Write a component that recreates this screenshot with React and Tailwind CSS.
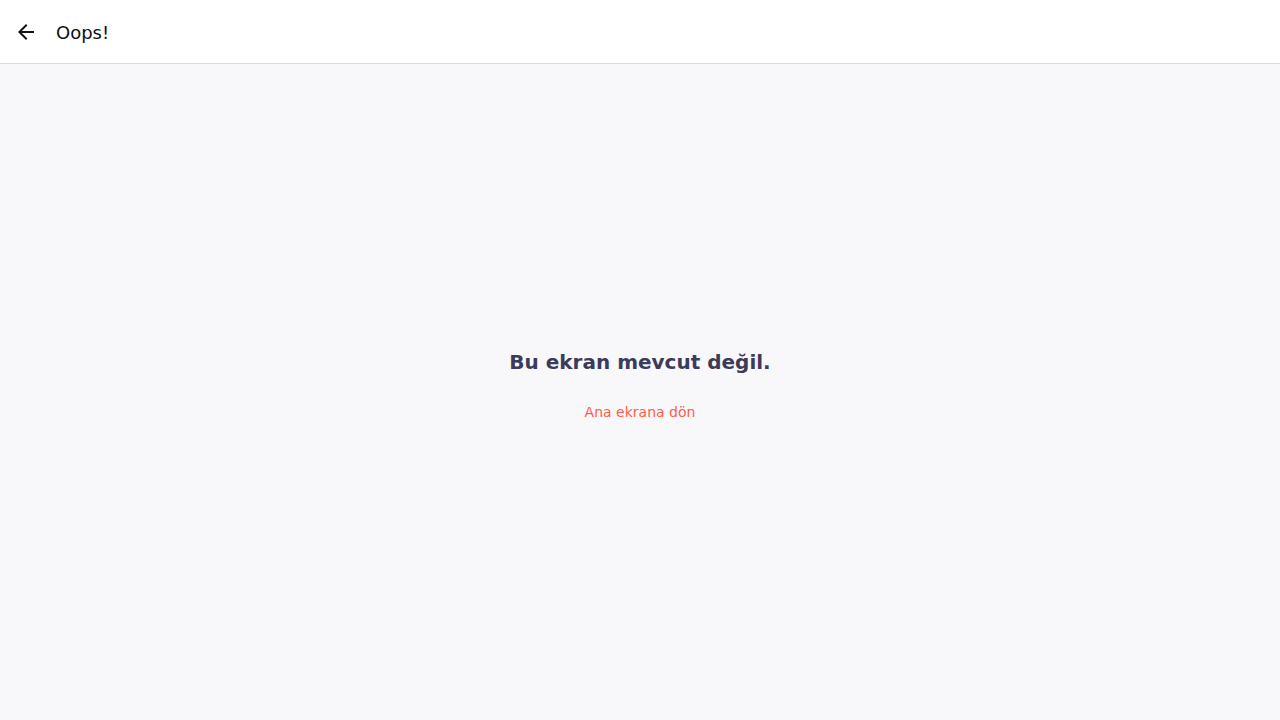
export default function App() {
  return (
    <div className="flex h-screen flex-col bg-[#f8f8fa] font-['DejaVu_Sans',sans-serif]">
      <header className="flex h-16 shrink-0 items-center border-b border-[#dcdcdc] bg-white">
        <button className="ml-[14px] flex h-6 w-6 items-center justify-center text-[#111]">
          <svg viewBox="0 0 24 24" width="24" height="24" fill="currentColor">
            <path d="M20 11H7.83l5.59-5.59L12 4l-8 8 8 8 1.41-1.41L7.83 13H20v-2z" />
          </svg>
        </button>
        <h1 className="ml-[18px] pt-[2px] text-[18px] text-[#111]">Oops!</h1>
      </header>
      <main className="flex flex-1 flex-col items-center justify-center pb-[12px]">
        <h2 className="text-[20px] leading-6 font-bold text-[#3d3b5a]">Bu ekran mevcut değil.</h2>
        <a href="#" className="mt-[28px] text-[14px] leading-5 text-[#ff5c49]">Ana ekrana dön</a>
      </main>
    </div>
  );
}
